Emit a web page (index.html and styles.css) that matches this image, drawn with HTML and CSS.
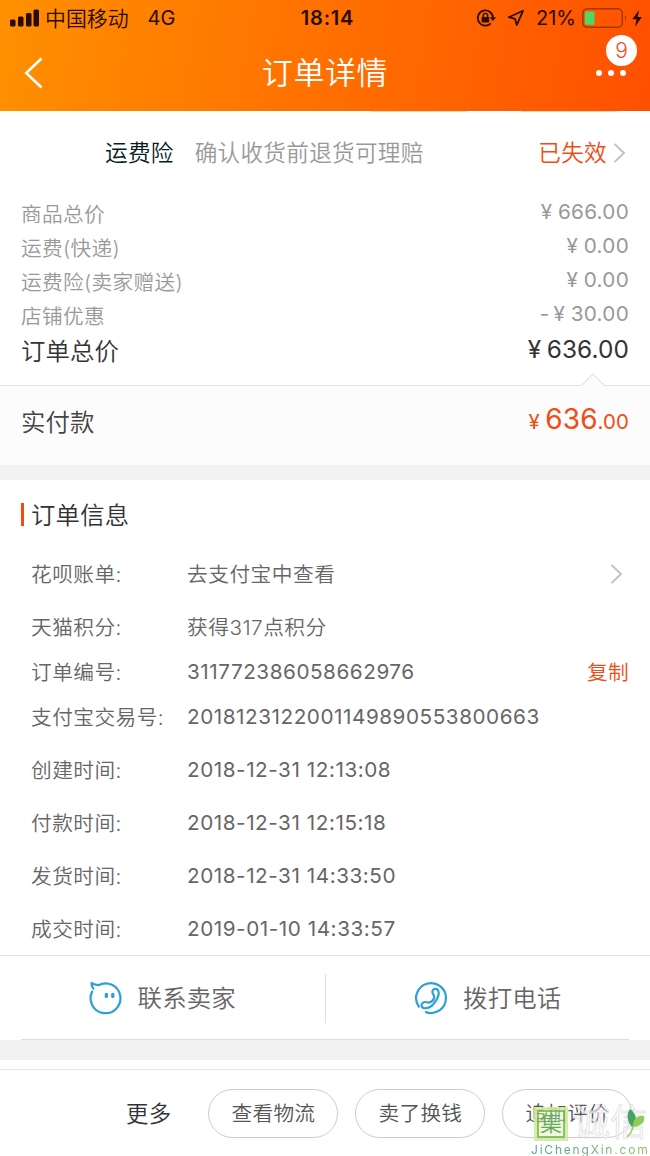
FILE: index.html
```html
<!DOCTYPE html>
<html lang="zh-CN">
<head>
    <meta charset="UTF-8">
    <meta name="viewport" content="width=device-width, initial-scale=1.0">
    <title>订单详情</title>
    <link rel="stylesheet" href="styles.css">
</head>
<body>

<header class="header">
    <div class="status">
        <div class="status-left">
            <svg class="signal" width="30" height="18" viewBox="0 0 30 18">
                <rect x="0" y="10.5" width="5.5" height="7" rx="1.5"/>
                <rect x="8" y="7.5" width="5.5" height="10" rx="1.5"/>
                <rect x="16" y="4" width="5.5" height="13.5" rx="1.5"/>
                <rect x="23.5" y="0.5" width="5.5" height="17" rx="1.5"/>
            </svg>
            <span class="carrier">中国移动</span>
            <span>4G</span>
        </div>
        <div class="clock">18:14</div>
        <div class="status-right">
            <svg class="lock" width="22" height="18" viewBox="0 0 22 18">
                <path d="M14.8 14.4A7.6 7.6 0 1 1 17 9" fill="none" stroke="#2a0b00" stroke-width="1.8"/>
                <path d="M13.6 8.2H20L16.9 12z"/>
                <rect x="5.6" y="8" width="7.6" height="5.4" rx="0.8"/>
                <path d="M7.2 8.5V6.6a2.2 2.2 0 0 1 4.4 0v1.9" fill="none" stroke="#2a0b00" stroke-width="1.4"/>
            </svg>
            <svg class="arrow" width="18" height="18" viewBox="0 0 18 18">
                <path d="M16 1.8L1.8 8.2L8 9.8L9.8 16z" fill="none" stroke="#2a0b00" stroke-width="1.8" stroke-linejoin="round"/>
            </svg>
            <span class="percent">21%</span>
            <svg class="battery" width="46" height="20" viewBox="0 0 46 20">
                <rect x="0.8" y="0.8" width="39.5" height="18.4" rx="4.5" fill="none" stroke="#9c3a00" stroke-width="1.5"/>
                <rect x="3" y="3.4" width="9.5" height="13.4" rx="1" fill="#4cd964"/>
                <path d="M43 6.5q2.4 3.5 0 7z" fill="#9c3a00"/>
            </svg>
            <svg class="bolt" width="10" height="17" viewBox="0 0 9 16">
                <path d="M6.4 0L0 8.8H4L2.6 16L9 6.6H5.2z"/>
            </svg>
        </div>
    </div>
    <div class="navbar">
        <svg class="back" width="20" height="32" viewBox="0 0 20 32">
            <path d="M17.5 1.5L2.2 16L17.5 30.5" fill="none" stroke="#fff" stroke-width="2.6"/>
        </svg>
        <h1 class="title">订单详情</h1>
        <div class="more-menu">
            <i class="dot"></i><i class="dot"></i><i class="dot"></i>
            <span class="badge">9</span>
        </div>
    </div>
</header>

<section class="insurance">
    <span class="insurance-name">运费险</span>
    <span class="insurance-text">确认收货前退货可理赔</span>
    <span class="insurance-state">已失效</span>
    <svg class="chevron" width="13" height="20" viewBox="0 0 13 20">
        <path d="M1.5 1L11 10L1.5 19" fill="none" stroke="#c4c4c4" stroke-width="2"/>
    </svg>
    <i class="edge edge-left"></i>
    <i class="edge edge-right"></i>
</section>

<section class="prices">
    <div class="price"><span>商品总价</span><span class="amount"><i class="yen">¥</i>666.00</span></div>
    <div class="price"><span>运费(快递)</span><span class="amount"><i class="yen">¥</i>0.00</span></div>
    <div class="price"><span>运费险(卖家赠送)</span><span class="amount"><i class="yen">¥</i>0.00</span></div>
    <div class="price"><span>店铺优惠</span><span class="amount"><i class="minus">-</i><i class="yen">¥</i>30.00</span></div>
    <div class="price total"><span>订单总价</span><span class="amount"><i class="yen">¥</i>636.00</span></div>
</section>

<section class="paid">
    <svg class="notch" width="24" height="13" viewBox="0 0 24 13">
        <path d="M0.5 12.5L12 1L23.5 12.5V13H0.5z" fill="#fcfcfc"/>
        <path d="M0 12.5H0.5L12 1L23.5 12.5H24" fill="none" stroke="#d8d8d8"/>
    </svg>
    <span>实付款</span>
    <span class="paid-amount"><i class="yen">¥</i><span class="big">636</span>.00</span>
</section>

<section class="info">
    <h2 class="info-title">订单信息</h2>
    <div class="row">
        <span class="label">花呗账单:</span><span class="value">去支付宝中查看</span>
        <svg class="chevron" width="13" height="20" viewBox="0 0 13 20">
            <path d="M1.5 1L11 10L1.5 19" fill="none" stroke="#c4c4c4" stroke-width="2"/>
        </svg>
    </div>
    <div class="row"><span class="label">天猫积分:</span><span class="value">获得317点积分</span></div>
    <div class="row short"><span class="label">订单编号:</span><span class="value num">311772386058662976</span><span class="copy">复制</span></div>
    <div class="row"><span class="label">支付宝交易号:</span><span class="value num">2018123122001149890553800663</span></div>
    <div class="row"><span class="label">创建时间:</span><span class="value num">2018-12-31 12:13:08</span></div>
    <div class="row"><span class="label">付款时间:</span><span class="value num">2018-12-31 12:15:18</span></div>
    <div class="row"><span class="label">发货时间:</span><span class="value num">2018-12-31 14:33:50</span></div>
    <div class="row"><span class="label">成交时间:</span><span class="value num">2019-01-10 14:33:57</span></div>
</section>

<section class="contact">
    <div class="contact-item">
        <svg width="34" height="34" viewBox="0 0 34 34" fill="none" stroke="#2a9fdc" stroke-width="2.2" stroke-linecap="round" stroke-linejoin="round">
            <path d="M3.2 10.6A14.9 14.9 0 1 0 9.4 4.2Q5.6 3.9 2.6 2Q2.3 5.2 4.4 7.6"/>
            <path d="M17.4 13.4v2M23.8 13.4v2" stroke-width="3.4"/>
        </svg>
        <span class="contact-text">联系卖家</span>
    </div>
    <i class="divider"></i>
    <div class="contact-item">
        <svg width="34" height="34" viewBox="0 0 34 34" fill="none" stroke="#2a9fdc" stroke-width="2.2" stroke-linecap="round" stroke-linejoin="round">
            <path d="M4.8 25.6A14.9 14.9 0 1 1 12 31.1"/>
            <path d="M8.4 22.2C6.6 23.8 7.4 26.8 10.2 27.2C14 27.6 18.4 24.8 21.2 20.8C24 16.8 25.4 12.4 24.2 9.6C23 6.8 18.8 7.4 18.4 10.6C18.2 13 20.6 14 20.2 16.2C19.8 18.4 17.6 20.8 15.4 21.4C13.4 22 12.4 20.8 10.8 21C9.8 21.2 9 21.6 8.4 22.2z"/>
        </svg>
        <span class="contact-text">拨打电话</span>
    </div>
</section>

<div class="gap"></div>

<footer class="footer">
    <span class="more">更多</span>
    <button class="btn">查看物流</button>
    <button class="btn">卖了换钱</button>
    <button class="btn">追加评价</button>
    <div class="watermark">
        <div class="mark-top">
            <span class="mark-seal">集</span>
            <span class="mark-name">诚信</span>
            <svg class="leaf" width="20" height="30" viewBox="0 0 20 30">
                <path d="M3 1C-1 6 0 14 5 19C11 14 10 6 3 1z" fill="#43a565"/>
                <path d="M6 19C6 11 10 7 17 8C19 14 13 19 6 19z" fill="#92cc55"/>
                <path d="M6 18Q5 25 0 29" fill="none" stroke="#92cc55" stroke-width="1.5"/>
            </svg>
        </div>
        <div class="mark-url">JiChengXin.com</div>
    </div>
</footer>

</body>
</html>
```

FILE: styles.css
```css
* {
    box-sizing: border-box;
}
body {
    margin: 0;
    width: 650px;
    height: 1156px;
    overflow: hidden;
    background-color: #fff;
    color: #666;
    font-family: Inter, "Noto Sans CJK SC", sans-serif;
    font-size: 20.7px;
    font-weight: 350;
    letter-spacing: 0.3px;
}
i {
    font-style: normal;
}
svg {
    flex: none;
}

/* cabecera */
.header {
    height: 111px;
    background: linear-gradient(100deg, #ff9000, #ff5000);
    color: #fff;
}
.status {
    display: grid;
    grid-template-columns: 1fr 60px 1fr;
    align-items: center;
    height: 36px;
    padding: 0 8px 0 10px;
    color: #2a0b00;
    fill: #2a0b00;
    font-size: 20px;
    font-weight: 380;
    letter-spacing: 0;
}
.status-left,
.status-right {
    display: flex;
    align-items: center;
}
.carrier {
    margin: 0 19px 2px 5px;
    font-size: 20.9px;
    font-weight: 350;
}
.clock {
    font-weight: 600;
    text-align: center;
    letter-spacing: 0.8px;
    padding-left: 3px;
}
.status-right {
    justify-content: flex-end;
}
.arrow {
    margin: 0 11px 0 9px;
}
.battery {
    margin: 0 4px 0 6px;
}
.navbar {
    display: flex;
    align-items: center;
    justify-content: space-between;
    height: 75px;
    padding: 0 24px 2px;
}
.title {
    margin: 0 0 0 10px;
    padding-bottom: 4px;
    font-size: 31px;
    font-weight: 350;
    letter-spacing: 0.6px;
}
.more-menu {
    position: relative;
    display: flex;
    gap: 6px;
}
.dot {
    width: 6px;
    height: 6px;
    border-radius: 50%;
    background-color: #fff;
}
.badge {
    position: absolute;
    right: -11px;
    bottom: 10px;
    width: 31px;
    height: 31px;
    border-radius: 50%;
    background-color: #fff;
    color: #e8501a;
    font-size: 21px;
    line-height: 31px;
    text-align: center;
    letter-spacing: 0;
}

/* seguro de envío */
.insurance {
    position: relative;
    display: flex;
    align-items: center;
    height: 83px;
    padding: 0 24px 0 105px;
    font-size: 22.6px;
    letter-spacing: 0.3px;
}
.insurance span {
    padding-bottom: 3px;
}
.insurance-name {
    color: #051b28;
}
.insurance-text {
    margin-left: 21px;
    color: #999;
}
.insurance-state {
    margin-left: auto;
    margin-right: 6px;
    color: #f04c14;
}
.edge {
    position: absolute;
    top: 0;
    width: 96px;
    height: 1px;
    background-color: #fbd3c0;
}
.edge-left {
    left: 371px;
}
.edge-right {
    left: 521px;
}

/* precios */
.prices {
    height: 191px;
    padding: 3px 21px 0;
    color: #999;
}
.price {
    display: flex;
    justify-content: space-between;
    height: 34px;
    line-height: 35px;
}
.amount {
    margin-top: -3px;
    font-weight: 380;
}
.yen {
    margin-right: 5.5px;
}
.minus {
    margin-right: 4px;
}
.total {
    height: 36px;
    line-height: 37px;
    color: #333;
    font-size: 24.4px;
    letter-spacing: 0.1px;
}
.total .amount {
    margin-top: -2px;
}
.paid {
    position: relative;
    display: flex;
    align-items: center;
    justify-content: space-between;
    height: 80px;
    padding: 0 21px 10px;
    border-top: 1px solid #e4e4e4;
    background-color: #fcfcfc;
    color: #444;
    font-size: 24.4px;
    letter-spacing: 0.1px;
}
.notch {
    position: absolute;
    top: -13px;
    right: 45px;
}
.paid-amount {
    padding-bottom: 3px;
    color: #f04c14;
    font-size: 20.4px;
    font-weight: 380;
}
.paid-amount .big {
    font-size: 28px;
}

/* datos del pedido */
.info {
    padding: 11px 21px 0;
    border-top: 15px solid #f2f2f2;
}
.info-title {
    display: flex;
    align-items: center;
    margin: 0 0 11px;
    height: 45px;
    color: #333;
    font-size: 24.4px;
    font-weight: 350;
    letter-spacing: 0.2px;
}
.info-title::before {
    content: "";
    width: 3px;
    height: 23px;
    margin: 2px 7px 0 0;
    background-color: #f04c14;
}
.row {
    display: flex;
    align-items: center;
    height: 53px;
    padding-left: 10px;
}
.row.short {
    height: 37px;
}
.row .chevron {
    margin: 0 6px 0 auto;
}
.label {
    width: 156px;
    padding-bottom: 2px;
    letter-spacing: 0.45px;
}
.value {
    padding-bottom: 2px;
    white-space: nowrap;
    letter-spacing: 0.5px;
}
.value.num {
    padding-bottom: 0;
    font-weight: 380;
    letter-spacing: 0.55px;
}
.copy {
    margin-left: auto;
    padding-bottom: 2px;
    color: #f04c14;
}

/* contacto */
.contact {
    display: flex;
    align-items: center;
    height: 85px;
    border-top: 1px solid #e4e4e4;
    background: linear-gradient(#dedede, #dedede) 21px 100% / 608px 1px no-repeat;
}
.contact-item {
    display: flex;
    flex: 1;
    align-items: center;
    justify-content: center;
    gap: 15px;
    font-size: 24.4px;
    letter-spacing: 0.2px;
}
.contact-text {
    padding-bottom: 4px;
}
.divider {
    width: 1px;
    height: 49px;
    background-color: #e0e0e0;
}
.gap {
    height: 20px;
    background-color: #f2f2f2;
}

/* barra inferior */
.footer {
    position: relative;
    display: flex;
    align-items: center;
    gap: 17px;
    height: 96px;
    padding: 10px 17px 0 126px;
    background: linear-gradient(#e8e8e8, #e8e8e8) 0 9px / 100% 1px no-repeat;
}
.more {
    margin-right: 20px;
    padding-bottom: 3px;
    color: #333;
    font-size: 22.4px;
}
.btn {
    flex: none;
    width: 130px;
    height: 49px;
    padding: 0 0 2px;
    border: 1px solid #ccc;
    border-radius: 25px;
    background-color: #fff;
    color: #555;
    font: inherit;
    letter-spacing: 0.3px;
}

/* marca de agua */
.watermark {
    position: absolute;
    left: 531px;
    bottom: 0;
    width: 119px;
    height: 49px;
    letter-spacing: 0;
    white-space: nowrap;
}
.mark-top {
    display: flex;
    padding-left: 3px;
    height: 35px;
}
.mark-seal {
    width: 34px;
    height: 34px;
    border: 3px solid rgba(205, 235, 150, 0.8);
    outline: 2px solid rgba(110, 175, 70, 0.75);
    outline-offset: -5px;
    background-color: rgba(225, 242, 190, 0.5);
    color: #67a957;
    font-size: 22px;
    line-height: 27px;
    text-align: center;
}
.mark-name {
    margin-left: 5px;
    color: rgba(255, 255, 255, 0.6);
    font-size: 37px;
    line-height: 32px;
    -webkit-text-stroke: 1px rgba(215, 215, 215, 0.7);
}
.leaf {
    margin: 1px 0 0 -20px;
}
.mark-url {
    height: 14px;
    background: linear-gradient(90deg, #4d9d98, #8fc45c);
    background-clip: text;
    -webkit-background-clip: text;
    color: transparent;
    font-size: 12px;
    font-weight: 400;
    line-height: 15px;
    letter-spacing: 1.8px;
}
```
